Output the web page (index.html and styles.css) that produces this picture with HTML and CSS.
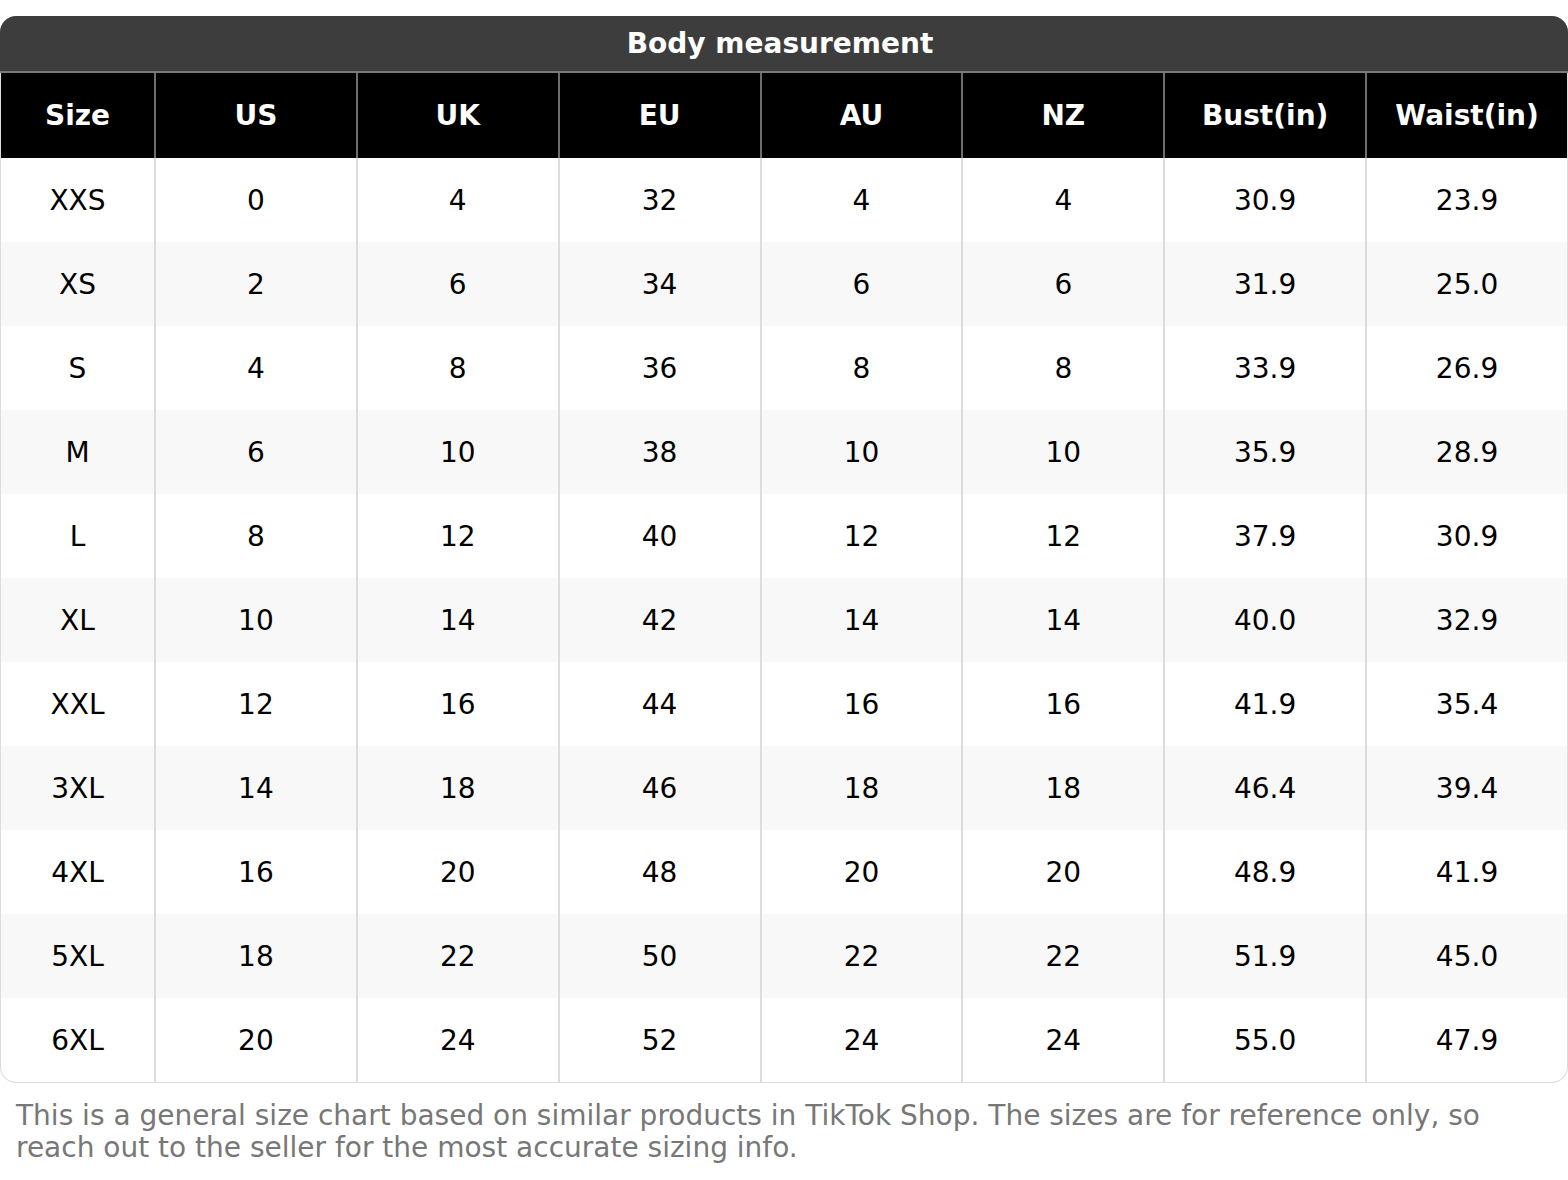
FILE: index.html
```html
<!DOCTYPE html>
<html>
<head>
<meta charset="utf-8">
<link rel="stylesheet" href="styles.css">
</head>
<body>
<div class="chart">
  <div class="title">Body measurement</div>
  <table class="grid">
    <colgroup>
      <col class="c-size"><col><col><col><col><col><col><col>
    </colgroup>
    <thead>
      <tr><th>Size</th><th>US</th><th>UK</th><th>EU</th><th>AU</th><th>NZ</th><th>Bust(in)</th><th>Waist(in)</th></tr>
    </thead>
    <tbody>
      <tr><td>XXS</td><td>0</td><td>4</td><td>32</td><td>4</td><td>4</td><td>30.9</td><td>23.9</td></tr>
      <tr><td>XS</td><td>2</td><td>6</td><td>34</td><td>6</td><td>6</td><td>31.9</td><td>25.0</td></tr>
      <tr><td>S</td><td>4</td><td>8</td><td>36</td><td>8</td><td>8</td><td>33.9</td><td>26.9</td></tr>
      <tr><td>M</td><td>6</td><td>10</td><td>38</td><td>10</td><td>10</td><td>35.9</td><td>28.9</td></tr>
      <tr><td>L</td><td>8</td><td>12</td><td>40</td><td>12</td><td>12</td><td>37.9</td><td>30.9</td></tr>
      <tr><td>XL</td><td>10</td><td>14</td><td>42</td><td>14</td><td>14</td><td>40.0</td><td>32.9</td></tr>
      <tr><td>XXL</td><td>12</td><td>16</td><td>44</td><td>16</td><td>16</td><td>41.9</td><td>35.4</td></tr>
      <tr><td>3XL</td><td>14</td><td>18</td><td>46</td><td>18</td><td>18</td><td>46.4</td><td>39.4</td></tr>
      <tr><td>4XL</td><td>16</td><td>20</td><td>48</td><td>20</td><td>20</td><td>48.9</td><td>41.9</td></tr>
      <tr><td>5XL</td><td>18</td><td>22</td><td>50</td><td>22</td><td>22</td><td>51.9</td><td>45.0</td></tr>
      <tr><td>6XL</td><td>20</td><td>24</td><td>52</td><td>24</td><td>24</td><td>55.0</td><td>47.9</td></tr>
    </tbody>
  </table>
  <p class="note">This is a general size chart based on similar products in TikTok Shop. The sizes are for reference only, so reach out to the seller for the most accurate sizing info.</p>
</div>
</body>
</html>
```

FILE: styles.css
```css
html, body {
  margin: 0;
  padding: 0;
  background: #ffffff;
}

body {
  font-family: "DejaVu Sans", Verdana, sans-serif;
  color: #000;
}

.chart {
  padding-top: 16px;
  width: 1568px;
}

.title {
  background: #3d3d3d;
  color: #ffffff;
  font-weight: bold;
  font-size: 28px;
  height: 57px;
  line-height: 55px;
  padding-right: 8px;
  text-align: center;
  border-radius: 16px 16px 0 0;
  border-bottom: 2px solid #7a7a7a;
  box-sizing: border-box;
}

.grid {
  width: 1568px;
  table-layout: fixed;
  border-collapse: separate;
  border-spacing: 0;
  border: 1px solid #dcdcdc;
  border-top: 0;
  border-radius: 0 0 16px 16px;
  overflow: hidden;
}

.c-size {
  width: 153px;
}

.grid th,
.grid td {
  height: 84px;
  padding: 0;
  text-align: center;
  vertical-align: middle;
  font-size: 28px;
  box-sizing: border-box;
}

.grid th {
  height: 85px;
  background: #000;
  color: #fff;
  font-weight: bold;
  border-left: 2px solid #6e6e6e;
}

.grid td {
  border-left: 2px solid #dcdcdc;
}

.grid th:first-child,
.grid td:first-child {
  border-left: 0;
}

.grid tbody tr:nth-child(even) td {
  background: #f8f8f8;
}

.note {
  margin: 17px 16px 0;
  font-size: 28px;
  line-height: 32px;
  color: #777777;
}
```
